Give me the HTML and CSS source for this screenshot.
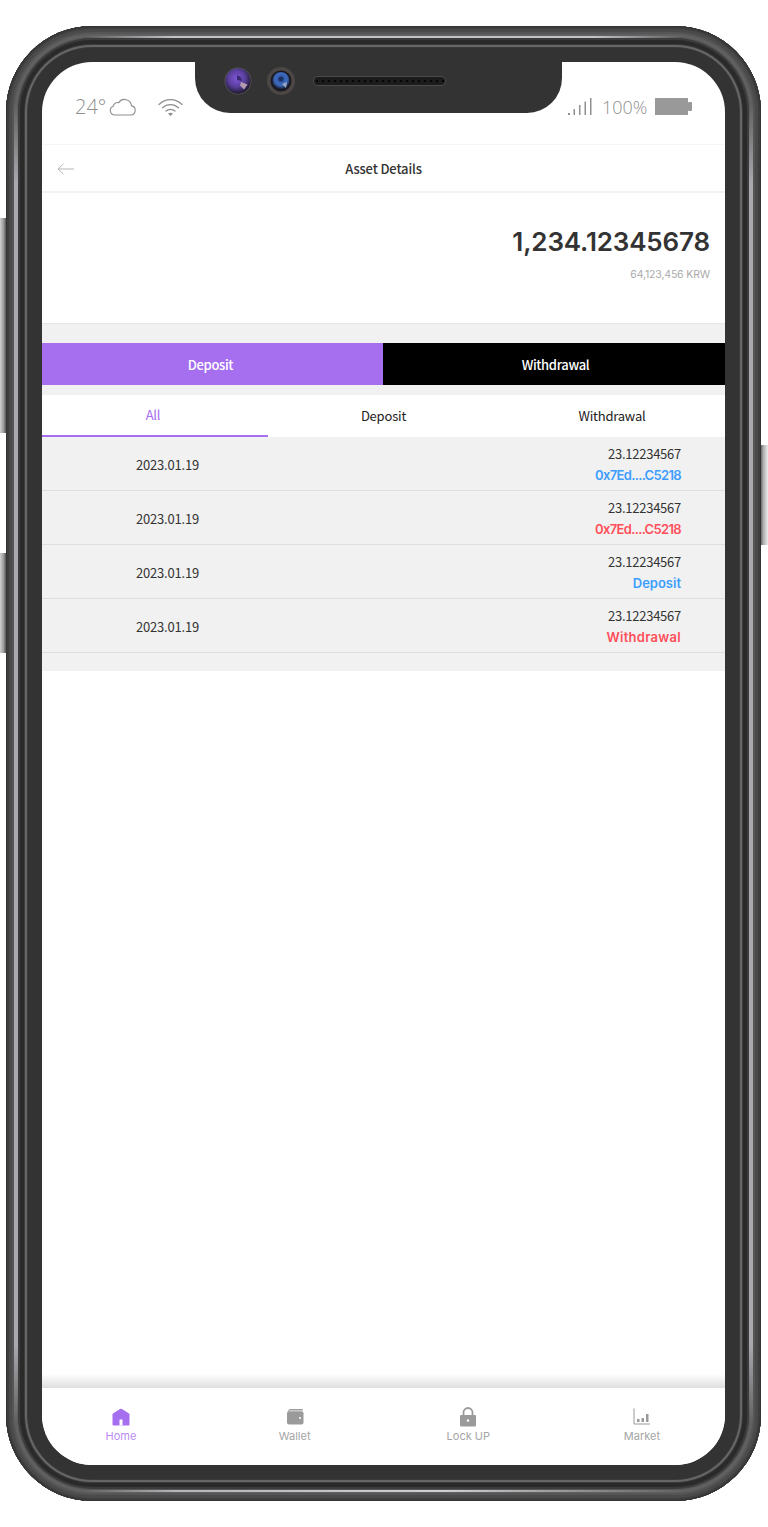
FILE: index.html
```html
<!DOCTYPE html>
<html lang="en">
<head>
<meta charset="utf-8">
<title>Asset Details</title>
<link rel="stylesheet" href="styles.css">
</head>
<body>
<div class="phone">
  <span class="side side-l1"></span>
  <span class="side side-l2"></span>
  <span class="side side-r"></span>
  <div class="screen">
    <div class="status">
      <div class="status-left">
        <span class="temp">24°</span>
        <svg class="cloud" width="27" height="18" viewBox="0 0 27 18" fill="none" stroke="#8f8f8f" stroke-width="1.100"><path d="M6 17h15.500a4.600 4.600 0 0 0 1-9.100 7 7 0 0 0-12.800-3.300 4.500 4.500 0 0 0-5.500 3.700A4.500 4.500 0 0 0 6 17z"/></svg>
        <svg class="wifi" width="25" height="19" viewBox="0 0 25 19" fill="none" stroke="#8f8f8f" stroke-width="1.200" stroke-linecap="round"><path d="M1 6.500c6.500-6.500 16.500-6.500 23 0"/><path d="M4.500 9.800c4.500-4.300 11.500-4.300 16 0"/><path d="M8 13c2.500-2.200 6.500-2.200 9 0"/><path d="M12.500 18l-2.500-2.500c1.500-1 3.500-1 5 0z" fill="#8f8f8f" stroke="none"/></svg>
      </div>
      <div class="notch">
        <svg class="cam cam-a" width="28" height="28" viewBox="0 0 28 28">
          <defs>
            <radialGradient id="lensA" cx="45%" cy="40%" r="60%"><stop offset="0" stop-color="#7d55d8"/><stop offset=".55" stop-color="#5a3f9c"/><stop offset="1" stop-color="#1f1a30"/></radialGradient>
            <radialGradient id="lensB" cx="50%" cy="42%" r="60%"><stop offset="0" stop-color="#2a4f9f"/><stop offset=".6" stop-color="#3f6cc0"/><stop offset="1" stop-color="#141a30"/></radialGradient>
          </defs>
          <circle cx="14" cy="14" r="13.500" fill="#555"/>
          <circle cx="14" cy="14" r="12.700" fill="url(#lensA)"/>
          <path d="M13 8.500a5.500 5.500 0 0 1 5 5.500l-5-1z" fill="#3a2a70"/>
          <path d="M17 15l6.500 2.500-3.500 5-4-4z" fill="#b49cb0"/>
        </svg>
        <svg class="cam cam-b" width="28" height="28" viewBox="0 0 28 28">
          <circle cx="14" cy="14" r="14" fill="#4c4644"/>
          <circle cx="14" cy="14" r="10.500" fill="#1a1a24"/>
          <circle cx="14" cy="13.500" r="8.500" fill="url(#lensB)"/>
          <circle cx="14" cy="12" r="2.500" fill="#1c2f60"/>
          <path d="M15 17l5-2-1 6z" fill="#9aa8c4"/>
        </svg>
        <span class="speaker"></span>
      </div>
      <div class="status-right">
        <svg class="signal" width="24" height="18" viewBox="0 0 24 18" fill="#8f8f8f"><rect x="0" y="15" width="2" height="2"/><rect x="5.500" y="11" width="1.500" height="6"/><rect x="11" y="7" width="1.500" height="10"/><rect x="16.500" y="3.500" width="1.500" height="13.500"/><rect x="22" y="0" width="1.500" height="17"/></svg>
        <span class="pct">100%</span>
        <svg class="battery" width="37" height="18" viewBox="0 0 37 18" fill="#999"><rect x="0" y="0" width="33" height="17"/><rect x="33" y="4" width="4" height="9" rx="1"/></svg>
      </div>
    </div>

    <header class="topbar">
      <svg class="back" width="18" height="12" viewBox="0 0 18 12" fill="none" stroke="#b5b5b5" stroke-width="1"><path d="M17 6H1M6.500.8L1 6l5.500 5.200"/></svg>
      <h1 class="title">Asset Details</h1>
    </header>

    <section class="balance">
      <div class="balance-main">1,234.12345678</div>
      <div class="balance-sub">64,123,456 KRW</div>
    </section>

    <div class="actions">
      <button class="action action-deposit">Deposit</button>
      <button class="action action-withdraw">Withdrawal</button>
    </div>

    <nav class="tabs">
      <a class="tab tab-active">All</a>
      <a class="tab">Deposit</a>
      <a class="tab">Withdrawal</a>
    </nav>

    <div class="list">
      <div class="row">
        <div class="date">2023.01.19</div>
        <div class="info"><div class="amount">23.12234567</div><div class="tag tag-blue tag-addr">0x7Ed....C5218</div></div>
      </div>
      <div class="row">
        <div class="date">2023.01.19</div>
        <div class="info"><div class="amount">23.12234567</div><div class="tag tag-red tag-addr">0x7Ed....C5218</div></div>
      </div>
      <div class="row">
        <div class="date">2023.01.19</div>
        <div class="info"><div class="amount">23.12234567</div><div class="tag tag-blue">Deposit</div></div>
      </div>
      <div class="row">
        <div class="date">2023.01.19</div>
        <div class="info"><div class="amount">23.12234567</div><div class="tag tag-red tag-word">Withdrawal</div></div>
      </div>
    </div>

    <div class="spacer"></div>

    <footer class="bottom">
      <a class="nav nav-active">
        <svg width="18" height="18" viewBox="0 0 18 18"><path d="M8 1L1 5.500Q.500 6 .500 6.500V16.500Q.500 17.500 1.500 17.500H16.500Q17.500 17.500 17.500 16.500V6.500Q17.500 6 17 5.500L10 1Q9 .500 8 1z" fill="#a56ff0"/><rect x="7.500" y="11.500" width="3" height="6" fill="#fff"/></svg>
        <span>Home</span>
      </a>
      <a class="nav">
        <svg width="18" height="18" viewBox="0 0 18 18"><path d="M2 4C2 2 3 1 4.500 1H15.500C16.500 1 17 1.500 17 2.500H3.500z" fill="#9a9a9a"/><rect x="1" y="3.200" width="16.500" height="13.300" rx="2" fill="#9a9a9a"/><circle cx="14" cy="10" r="1" fill="#fff"/></svg>
        <span>Wallet</span>
      </a>
      <a class="nav">
        <svg width="18" height="20" viewBox="0 0 18 20"><path d="M4.500 9V5.500a4.500 4.500 0 0 1 9 0V9" fill="none" stroke="#9a9a9a" stroke-width="1.800"/><rect x="1" y="8" width="16" height="11.500" rx="1" fill="#9a9a9a"/><circle cx="9" cy="13.500" r="1.200" fill="#fff"/></svg>
        <span>Lock UP</span>
      </a>
      <a class="nav">
        <svg width="18" height="18" viewBox="0 0 18 18" fill="#9a9a9a"><path d="M1 0.500V16H17" fill="none" stroke="#9a9a9a" stroke-width="1"/><rect x="4" y="11" width="2.500" height="3"/><rect x="8.500" y="10" width="2.500" height="4"/><rect x="13" y="6" width="2.500" height="8"/></svg>
        <span>Market</span>
      </a>
    </footer>
  </div>
</div>
</body>
</html>
```

FILE: styles.css
```css
* { box-sizing: border-box; }

html, body {
  margin: 0;
  padding: 0;
  background: #fff;
}

body {
  width: 768px;
  height: 1527px;
  overflow: hidden;
  padding: 26px 7px 0 6px;
  font-family: "Noto Sans CJK KR", "Noto Sans", sans-serif;
  color: #333;
}

.phone {
  position: relative;
  width: 755px;
  height: 1475px;
  padding: 36px;
  border-radius: 86px;
  background: #333;
  box-shadow:
    inset 0 0 0 1px #333,
    inset 0 0 0 3px #3e3e3e,
    inset 0 0 0 6px #4a4a4a,
    inset 0 0 0 8px #555,
    inset 0 0 0 11px #606062,
    inset 0 0 0 12px #555,
    inset 0 0 0 14px #3c3c3c,
    inset 0 0 0 18px #2a2a2a,
    inset 0 0 0 19px #3c3c3c,
    inset 0 0 0 21px #666,
    inset 0 0 0 22px #3a3a3a;
}

/* chrome highlights running along the straight parts of the frame */
.phone::before {
  content: "";
  position: absolute;
  inset: 0;
  pointer-events: none;
  background:
    linear-gradient(transparent, #a9a9ae 6%, #a9a9ae 94%, transparent) 8px center / 4px 1320px no-repeat,
    linear-gradient(transparent, #a9a9ae 6%, #a9a9ae 94%, transparent) right 8px center / 4px 1320px no-repeat,
    linear-gradient(90deg, transparent, #c4c4c8 15%, #c4c4c8 85%, transparent) center 10px / 600px 2px no-repeat,
    linear-gradient(90deg, transparent, #b4b4b8 15%, #d0d0d4 60%, transparent) center bottom 9px / 600px 2px no-repeat;
}

.side {
  position: absolute;
  width: 6px;
  background: linear-gradient(90deg, #d0d0d0, #9a9a9a 60%, #555);
}
.side-l1 { left: -6px; top: 192px; height: 215px; }
.side-l2 { left: -6px; top: 527px; height: 100px; }
.side-r {
  right: -7px;
  width: 7px;
  top: 419px;
  height: 100px;
  background: linear-gradient(90deg, #666, #aaa 30%, #eee);
}

.screen {
  height: 100%;
  display: flex;
  flex-direction: column;
  background: #fff;
  border-radius: 50px;
  overflow: hidden;
}

.status {
  flex: 0 0 82px;
  display: flex;
  align-items: flex-start;
}
.status-left {
  flex: 0 0 153px;
  display: flex;
  align-items: center;
  padding: 33px 0 0 33px;
  color: #8f8f8f;
}
.temp {
  font-family: "Open Sans", sans-serif;
  font-weight: 300;
  font-size: 20px;
  line-height: 24px;
}
.cloud { margin-left: 3px; }
.wifi { margin-left: 22px; }

.notch {
  flex: 0 0 367px;
  height: 51px;
  display: flex;
  align-items: flex-start;
  padding: 5px 0 0 29px;
  background: #333;
  border-radius: 0 0 35px 35px;
}
.cam-b { margin-left: 15px; }
.speaker {
  width: 131px;
  height: 8px;
  margin: 10px 0 0 19px;
  border-radius: 4px;
  background: radial-gradient(circle, #050505 1.300px, #1c1c1c 1.500px) 0 1px / 6px 6px repeat-x #1c1c1c;
  box-shadow: 0 0 0 1px #4c4c4c;
}

.status-right {
  flex: 1;
  display: flex;
  align-items: center;
  padding: 33px 0 0 6px;
  color: #8f8f8f;
}
.pct {
  margin-left: 10px;
  font-family: "Open Sans", sans-serif;
  font-weight: 300;
  font-size: 18px;
  line-height: 24px;
}
.battery { margin-left: 8px; }

.topbar {
  flex: 0 0 49px;
  position: relative;
  display: flex;
  align-items: center;
  justify-content: center;
  border-top: 1px solid #f6f6f6;
  border-bottom: 2px solid #f2f2f2;
}
.back {
  position: absolute;
  left: 15px;
  top: 18px;
}
.title {
  margin: 0;
  font-size: 13px;
  font-weight: 500;
  letter-spacing: -0.15px;
  color: #333;
}

.balance {
  flex: 0 0 131px;
  padding: 29px 15px 0 0;
  text-align: right;
  border-bottom: 1px solid #e6e6e6;
  background: #fff;
}
.balance-main {
  font-family: Inter, sans-serif;
  font-size: 26px;
  font-weight: 600;
  letter-spacing: -0.15px;
  line-height: 40px;
  color: #333;
}
.balance-sub {
  margin-top: 3px;
  font-family: Inter, sans-serif;
  font-size: 10.500px;
  letter-spacing: -0.15px;
  line-height: 20px;
  color: #aaa;
}

.actions {
  flex: 0 0 71px;
  display: grid;
  grid-template-columns: 341px 1fr;
  grid-template-rows: 42px;
  padding: 19px 0 10px;
  background: #f1f1f1;
}
.action {
  border: 0;
  padding: 0;
  font: 500 13px "Noto Sans CJK KR", sans-serif;
  letter-spacing: -0.35px;
  color: #fff;
}
.action-deposit { background: #a56ff0; padding-right: 4px; }
.action-withdraw { background: #000; padding-left: 3px; }

.tabs {
  flex: 0 0 42px;
  display: grid;
  grid-template-columns: 226px 1fr 226px;
  background: #fff;
}
.tab {
  display: flex;
  align-items: center;
  justify-content: center;
  padding-top: 2px;
  font-size: 13px;
  letter-spacing: -0.2px;
  line-height: 20px;
  color: #222;
  border-bottom: 2px solid transparent;
}
.tab-active {
  padding-right: 4px;
  padding-top: 0;
  color: #a56ff0;
  border-bottom-color: #a56ff0;
}

.list {
  flex: 0 0 234px;
  background: #f1f1f1;
}
.row {
  height: 54px;
  display: flex;
  align-items: center;
  justify-content: space-between;
  padding-right: 44px;
  border-bottom: 1px solid #dedede;
}
.date {
  width: 251px;
  padding-top: 2px;
  text-align: center;
  font-size: 13px;
  letter-spacing: -0.2px;
  color: #333;
}
.info {
  padding-top: 2px;
  text-align: right;
}
.amount {
  font-size: 13px;
  letter-spacing: -0.25px;
  line-height: 21px;
  color: #333;
}
.tag {
  padding-top: 1px;
  font-family: Inter, sans-serif;
  font-size: 13px;
  font-weight: 600;
  line-height: 21px;
}
.tag-addr { letter-spacing: -0.65px; }
.tag-word { letter-spacing: 0.3px; }
.tag-blue { color: #3d9eff; }
.tag-red { color: #ff4f5a; }

.spacer {
  flex: 1;
  background: linear-gradient(#fff calc(100% - 14px), #dedede);
}

.bottom {
  flex: 0 0 77px;
  display: flex;
  justify-content: space-between;
  padding: 19px 43px 0 39px;
  background: #fff;
}
.nav {
  width: 80px;
  height: 40px;
  display: flex;
  flex-direction: column;
  align-items: center;
  font-family: Inter, sans-serif;
  font-size: 11px;
  line-height: 16px;
  color: #a5a5a5;
}
.nav svg { height: 20px; }
.nav span { margin-top: 1px; }
.nav-active { color: #b98cf5; }
```
